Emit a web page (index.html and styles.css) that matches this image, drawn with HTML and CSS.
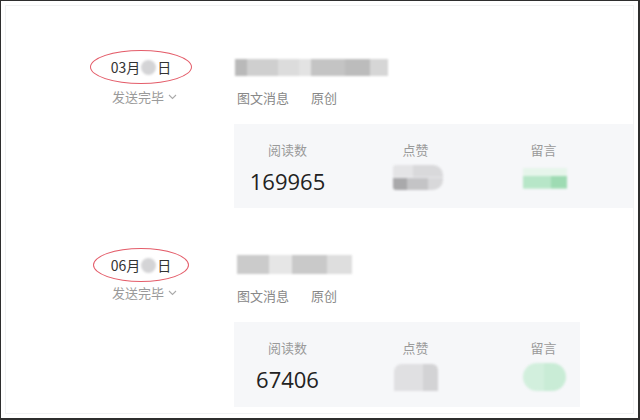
FILE: index.html
```html
<!DOCTYPE html>
<html lang="zh-CN">
<head>
<meta charset="utf-8">
<title>群发记录</title>
<link rel="stylesheet" href="styles.css">
</head>
<body>
<div class="page">
  <div class="inner">
    <div class="item">
      <div class="when">
        <div class="date">03月<span class="dot"></span>日</div>
        <div class="status">发送完毕<svg class="chev" width="9" height="6" viewBox="0 0 9 6"><polyline points="1,1 4.5,4.5 8,1" fill="none" stroke="#aaa" stroke-width="1.1"/></svg></div>
      </div>
      <div class="body">
        <div class="title-blur t1"></div>
        <div class="tags"><span>图文消息</span><span>原创</span></div>
        <div class="stats wide">
          <div class="stat"><div class="label">阅读数</div><div class="num">169965</div></div>
          <div class="stat"><div class="label">点赞</div><div class="blob like1"></div></div>
          <div class="stat"><div class="label">留言</div><div class="blob cmt1"></div></div>
        </div>
      </div>
    </div>
    <div class="item second">
      <div class="when">
        <div class="date">06月<span class="dot"></span>日</div>
        <div class="status">发送完毕<svg class="chev" width="9" height="6" viewBox="0 0 9 6"><polyline points="1,1 4.5,4.5 8,1" fill="none" stroke="#aaa" stroke-width="1.1"/></svg></div>
      </div>
      <div class="body">
        <div class="title-blur t2"></div>
        <div class="tags"><span>图文消息</span><span>原创</span></div>
        <div class="stats narrow">
          <div class="stat"><div class="label">阅读数</div><div class="num">67406</div></div>
          <div class="stat"><div class="label">点赞</div><div class="blob like2"></div></div>
          <div class="stat"><div class="label">留言</div><div class="blob cmt2"></div></div>
        </div>
      </div>
    </div>
  </div>
</div>
</body>
</html>
```
FILE: styles.css
```css
html, body {
  margin: 0;
  padding: 0;
  background: #fff;
}
body {
  font-family: "Noto Sans CJK SC", "Noto Sans", sans-serif;
  color: #333;
}
.page {
  width: 640px;
  height: 420px;
  box-sizing: border-box;
  border-style: solid;
  border-color: #2e2e2e;
  border-width: 1px 2px 2px 1px;
  overflow: hidden;
}
.inner {
  margin: 4px;
  height: calc(100% - 8px);
  box-sizing: border-box;
  border: 1px solid #f1f2f3;
  padding-top: 44px;
}
.item {
  display: flex;
}
.second {
  margin-top: 38px;
}
.when {
  width: 228px;
  flex: none;
  padding-left: 84px;
  box-sizing: border-box;
}
.date {
  width: 102px;
  height: 34px;
  box-sizing: border-box;
  border: 1.5px solid #e45d6a;
  border-radius: 50%;
  display: flex;
  align-items: center;
  justify-content: center;
  font-size: 14px;
  line-height: 18px;
  color: #333;
}
.second .date {
  width: 96px;
  margin-left: 3px;
  margin-top: 2px;
}
.second .status {
  margin-top: 2px;
}
.dot {
  display: inline-block;
  width: 15px;
  height: 15px;
  border-radius: 50%;
  background: #d4d4d6;
  filter: blur(1px);
  margin: 0 1px;
}
.status {
  margin-top: 4px;
  margin-left: 22px;
  font-size: 13px;
  line-height: 18px;
  color: #9a9a9a;
  display: flex;
  align-items: center;
}
.chev {
  margin-left: 4px;
}
.body {
  flex: 1;
  padding-top: 9px;
}
.title-blur {
  height: 17px;
  filter: blur(1.2px);
  margin-left: 1px;
}
.t1 {
  width: 153px;
  background: linear-gradient(90deg, #b9b9b9 0 8%, #cfcfcf 8% 28%, #dcdcdc 28% 42%, #e3e3e3 42% 50%, #c4c4c4 50% 72%, #bcbcbc 72% 88%, #d6d6d6 88% 100%);
}
.t2 {
  width: 115px;
  margin-left: 3px;
  height: 19px;
  background: linear-gradient(90deg, #cbcbcb 0 28%, #e6e6e6 28% 48%, #c9c9c9 48% 78%, #dedede 78% 100%);
}
.tags {
  margin-top: 14px;
  margin-left: 3px;
  display: flex;
  gap: 22px;
  font-size: 13px;
  line-height: 16px;
  color: #888;
}
.stats {
  margin-top: 18px;
  background: #f6f7f9;
  height: 84px;
  box-sizing: border-box;
  padding-top: 18px;
  display: grid;
  grid-template-columns: repeat(3, 107px);
  column-gap: 21px;
  align-content: start;
}
.wide {
  width: 399px;
}
.narrow {
  width: 346px;
  height: 85px;
}
.stat {
  display: flex;
  flex-direction: column;
  align-items: center;
}
.label {
  font-size: 13px;
  line-height: 16px;
  color: #9a9a9a;
}
.num {
  margin-top: 10px;
  font-family: "Open Sans", "Noto Sans", sans-serif;
  font-size: 22px;
  line-height: 26px;
  color: #222;
}
.blob {
  filter: blur(1px);
}
.like1 {
  width: 50px;
  height: 25px;
  margin-top: 7px;
  margin-left: 4px;
  border-radius: 3px 10px 10px 3px;
  background:
    linear-gradient(90deg, #a9a9ab 0 28%, #c4c4c6 28% 70%, #d8d8da 70% 100%) bottom / 100% 50% no-repeat,
    linear-gradient(90deg, #e4e4e6 0 40%, #d9d9db 40% 100%) top / 100% 50% no-repeat;
}
.cmt1 {
  width: 44px;
  height: 21px;
  margin-top: 10px;
  margin-left: 3px;
  background:
    linear-gradient(90deg, #b7e6c8 0 64%, #9edbb3 64% 100%) bottom / 100% 60% no-repeat,
    linear-gradient(90deg, #e6f5eb 0 100%) top / 100% 40% no-repeat;
}
.like2 {
  width: 44px;
  height: 27px;
  margin-top: 8px;
  margin-left: 1px;
  border-radius: 8px 6px 0 0;
  background: linear-gradient(90deg, #e0e0e2 0 66%, #d3d3d5 66% 100%);
}
.cmt2 {
  width: 43px;
  height: 28px;
  margin-top: 7px;
  margin-left: 2px;
  border-radius: 14px;
  background: linear-gradient(90deg, #d2efdd 0 50%, #c9ecd6 50% 100%);
}
```
